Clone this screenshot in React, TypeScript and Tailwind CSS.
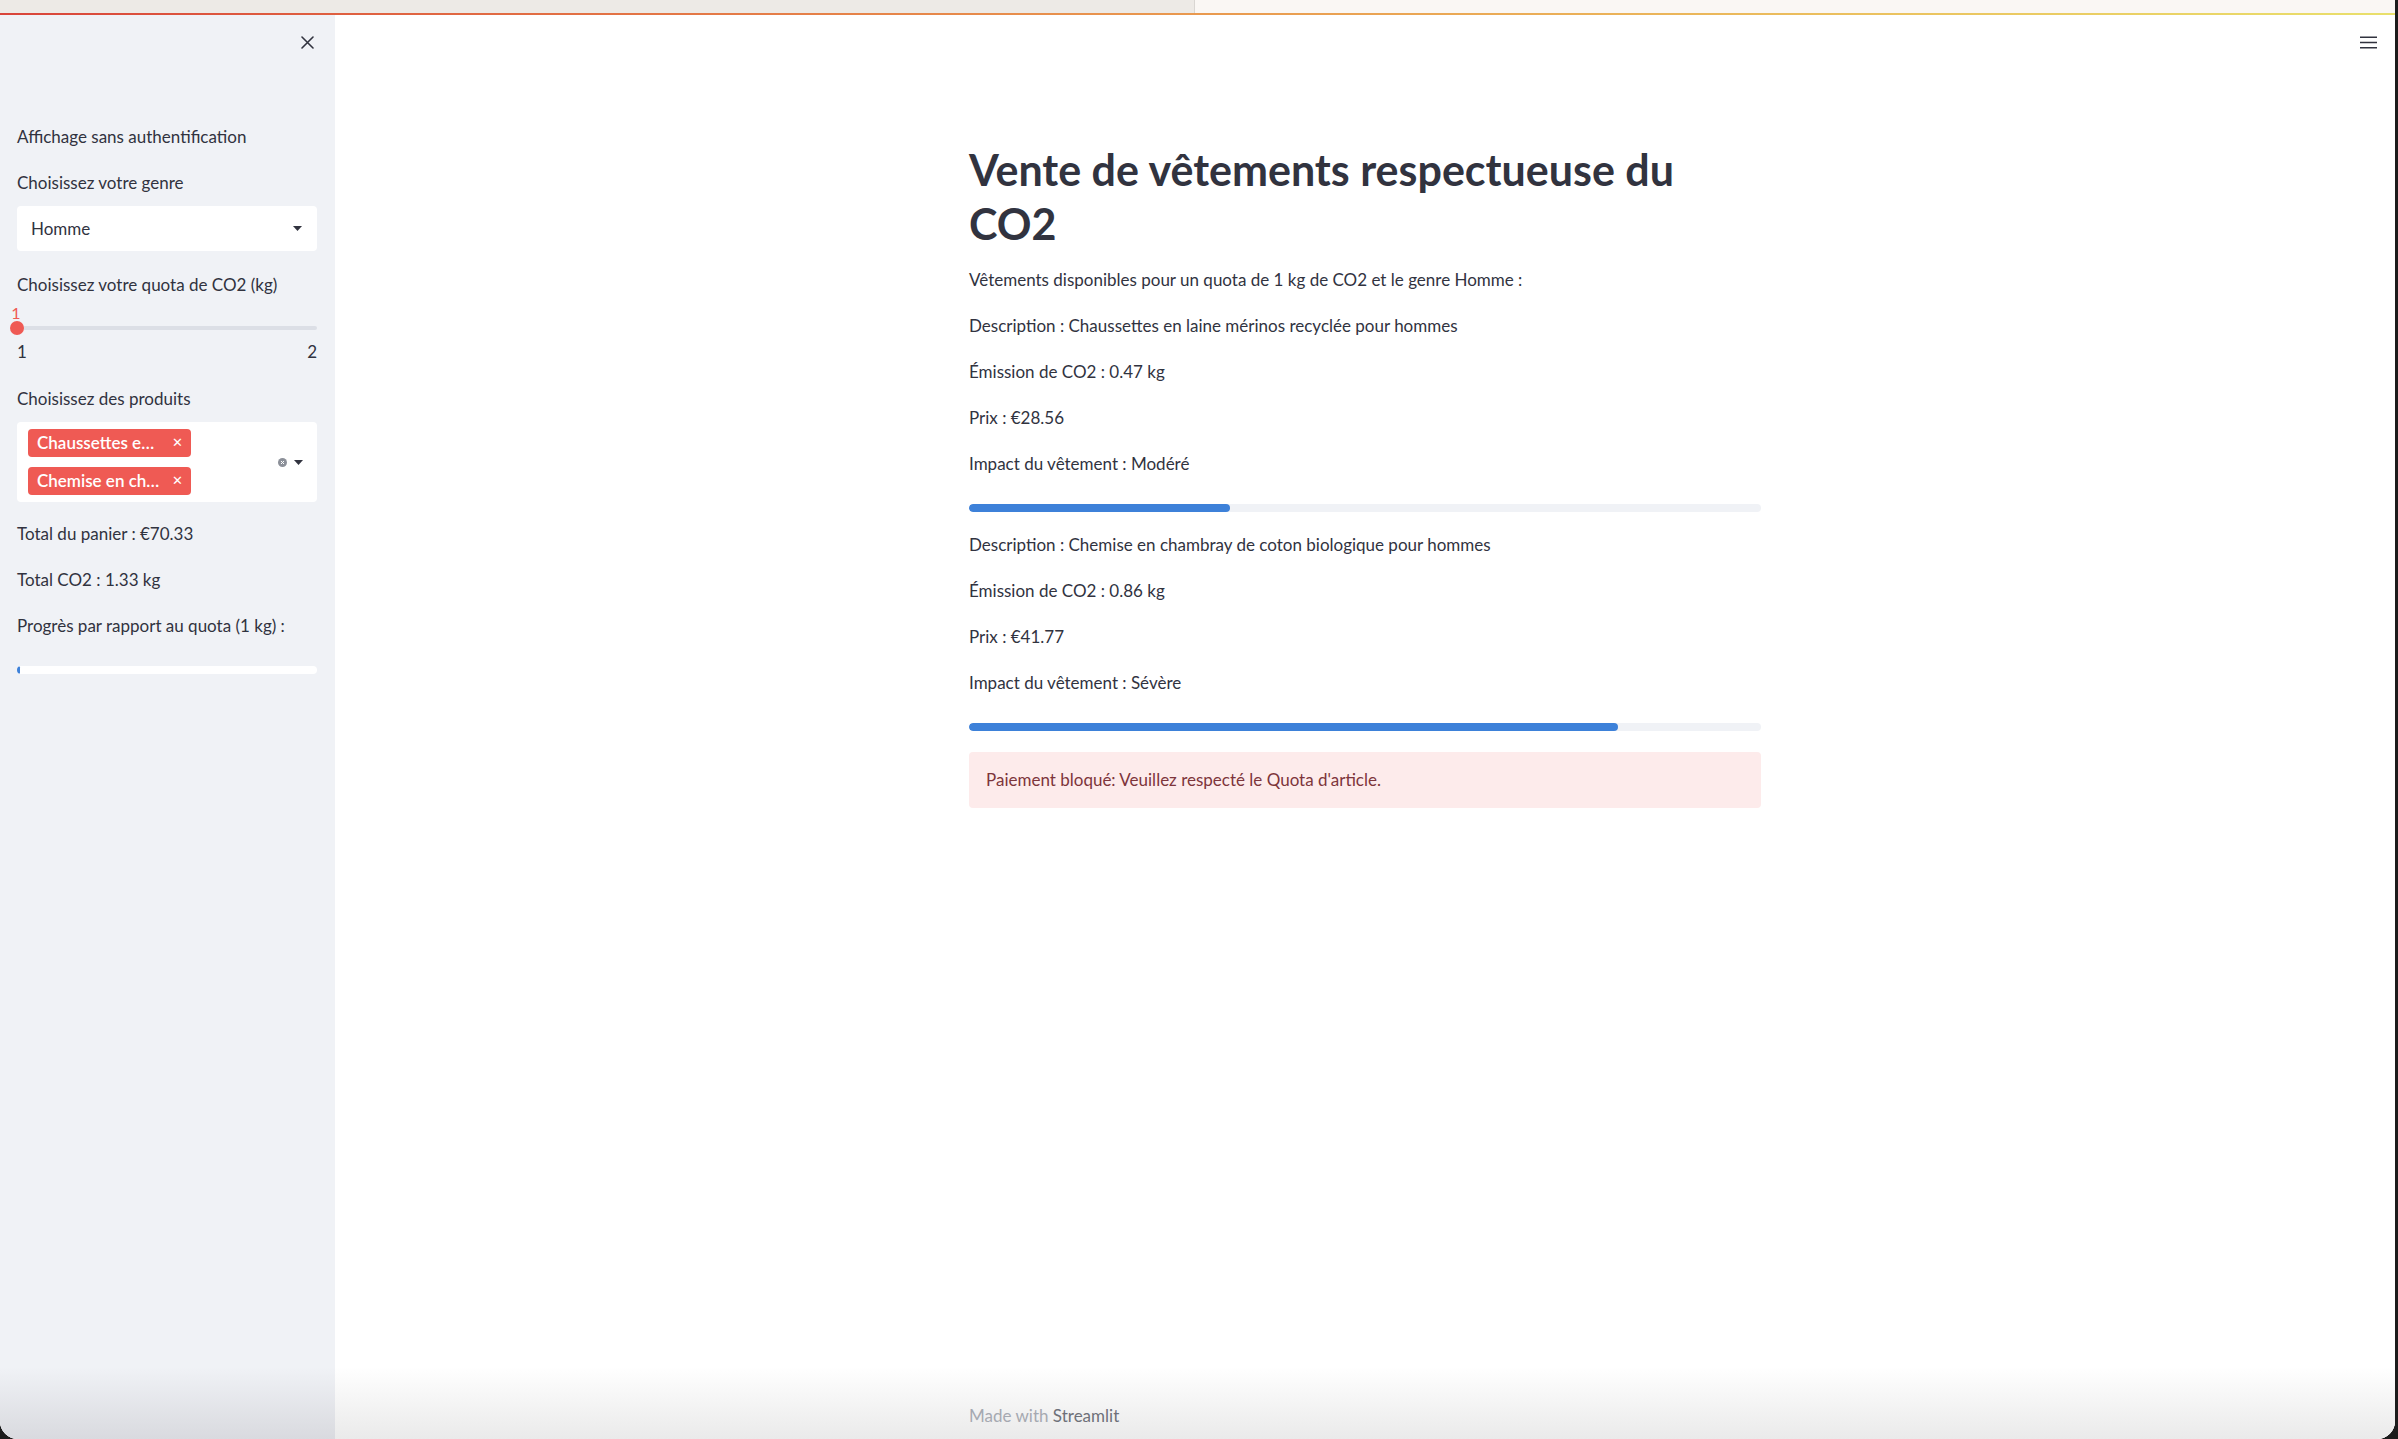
import React from 'react';

function CloseIcon() {
  return (
    <svg width="13" height="13" viewBox="0 0 13 13" fill="none" stroke="#31333f" strokeWidth="1.6" strokeLinecap="round">
      <path d="M1 1L12 12M12 1L1 12" />
    </svg>
  );
}

function MenuIcon() {
  return (
    <svg width="17" height="13" viewBox="0 0 17 13" fill="none" stroke="#31333f" strokeWidth="1.6">
      <path d="M0 1.2H17M0 6.5H17M0 11.8H17" />
    </svg>
  );
}

function Caret() {
  return (
    <svg width="9" height="5" viewBox="0 0 9 5">
      <path d="M0 0H9L4.5 5Z" fill="#31333f" />
    </svg>
  );
}

function ClearIcon() {
  return (
    <svg width="9" height="9" viewBox="0 0 9 9">
      <circle cx="4.5" cy="4.5" r="4.5" fill="#8c9099" />
      <path d="M3 3L6 6M6 3L3 6" stroke="#fff" strokeWidth="1" />
    </svg>
  );
}

function Tag({ label }: { label: string }) {
  return (
    <div className="h-7 w-[163px] rounded-[4px] bg-[#ef5a54] text-white flex items-center justify-between pl-[9px] pr-[8px] text-[17px] font-semibold">
      <span>{label}</span>
      <span className="text-[13px] font-normal">✕</span>
    </div>
  );
}

function Bar({ fill }: { fill: number }) {
  return (
    <div className="h-2 w-full rounded-full bg-[#f0f2f6] overflow-hidden">
      <div className="h-full rounded-full bg-[#3d81d9]" style={{ width: `${fill}%` }} />
    </div>
  );
}

const items = [
  { desc: 'Chaussettes en laine mérinos recyclée pour hommes', co2: '0.47', price: '28.56', impact: 'Modéré', fill: 33 },
  { desc: 'Chemise en chambray de coton biologique pour hommes', co2: '0.86', price: '41.77', impact: 'Sévère', fill: 82 },
];

export default function App() {
  return (
    <div className="w-[2398px] h-[1439px] bg-[#1c1c1c] overflow-hidden font-['Lato','Liberation_Sans',sans-serif] text-[#31333f]">
      <div className="w-[2395px] h-full flex flex-col rounded-b-[18px] overflow-hidden bg-white">
        <div className="h-[13px] flex">
          <div className="w-[1194px] bg-[#edeae6]" />
          <div className="flex-1 bg-[#faf7f4] border-l border-[#d9d6d2]" />
        </div>
        <div className="h-[2px] bg-linear-to-r from-[#d9443a] via-[#e9994f] to-[#e9e06c]" />

        <div className="flex flex-1 min-h-0">
          {/* sidebar */}
          <aside className="w-[335px] shrink-0 bg-[#f0f2f6] flex flex-col text-[17px]">
            <div className="flex justify-end pt-[21px] pr-[21px]">
              <CloseIcon />
            </div>
            <div className="pl-[17px] pr-[18px]">
              <p className="mt-[76px] h-6 leading-6">Affichage sans authentification</p>
              <p className="mt-[22px] h-6 leading-6">Choisissez votre genre</p>
              <div className="mt-[11px] h-[45px] bg-white rounded-[4px] flex items-center justify-between pl-[14px] pr-[15px]">
                <span>Homme</span>
                <Caret />
              </div>
              <p className="mt-[22px] h-6 leading-6">Choisissez votre quota de CO2 (kg)</p>
              <div className="mt-[6px]">
                <div className="relative -left-[8px] w-[14px] h-[19px] leading-[19px] text-center text-[16px] text-[#ef5a54]">1</div>
                <div className="relative h-3 flex items-center">
                  <div className="h-1 w-full rounded-full bg-[#dcdfe6]" />
                  <div className="absolute -left-[7px] top-[-1px] size-[14px] rounded-full bg-[#ef5a54]" />
                </div>
                <div className="mt-[7px] flex justify-between h-[22px] leading-[22px]">
                  <span>1</span>
                  <span>2</span>
                </div>
              </div>
              <p className="mt-[24px] h-6 leading-6">Choisissez des produits</p>
              <div className="mt-[11px] h-[80px] bg-white rounded-[4px] flex items-center pl-[11px] pr-[14px]">
                <div className="flex flex-col gap-[10px]">
                  <Tag label="Chaussettes e…" />
                  <Tag label="Chemise en ch…" />
                </div>
                <div className="ml-auto flex items-center gap-[7px]">
                  <ClearIcon />
                  <Caret />
                </div>
              </div>
              <p className="mt-[20px] h-6 leading-6">Total du panier : €70.33</p>
              <p className="mt-[22px] h-6 leading-6">Total CO2 : 1.33 kg</p>
              <p className="mt-[22px] h-6 leading-6">Progrès par rapport au quota (1 kg) :</p>
              <div className="mt-[28px] h-2 bg-white rounded-full overflow-hidden">
                <div className="h-full w-[3px] rounded-full bg-[#3d81d9]" />
              </div>
            </div>
            <div className="flex-1" />
            <div className="h-[72px] bg-linear-to-b from-[#f0f2f6] to-[#d9dadf]" />
          </aside>

          {/* main */}
          <main className="flex-1 flex flex-col bg-white">
            <div className="flex justify-end pt-[21px] pr-[18px]">
              <MenuIcon />
            </div>
            <div className="mx-auto w-[792px] text-[17px]">
              <h1 className="mt-[94px] text-[43px] font-bold leading-[54px]">
                Vente de vêtements respectueuse du
                <br />
                CO2
              </h1>
              <p className="mt-[17px] h-6 leading-6">Vêtements disponibles pour un quota de 1 kg de CO2 et le genre Homme :</p>
              {items.map((it, i) => (
                <div key={i} className={i === 0 ? '' : 'mt-[21px]'}>
                  <p className={i === 0 ? 'mt-[22px] h-6 leading-6' : 'h-6 leading-6'}>Description : {it.desc}</p>
                  <p className="mt-[22px] h-6 leading-6">Émission de CO2 : {it.co2} kg</p>
                  <p className="mt-[22px] h-6 leading-6">Prix : €{it.price}</p>
                  <p className="mt-[22px] h-6 leading-6">Impact du vêtement : {it.impact}</p>
                  <div className="mt-[28px]">
                    <Bar fill={it.fill} />
                  </div>
                </div>
              ))}
              <div className="mt-[21px] h-[56px] rounded-[4px] bg-[#fdebeb] text-[#7d353b] flex items-center px-[17px]">
                Paiement bloqué: Veuillez respecté le Quota d'article.
              </div>
            </div>
            <div className="flex-1" />
            <div className="h-[72px] bg-linear-to-b from-white to-[#eaeaea]">
              <div className="mx-auto w-[792px] pt-[37px] h-6 leading-6 text-[17px] text-[#a6a9b1]">
                Made with <span className="text-[#6e7079]">Streamlit</span>
              </div>
            </div>
          </main>
        </div>
      </div>
    </div>
  );
}
